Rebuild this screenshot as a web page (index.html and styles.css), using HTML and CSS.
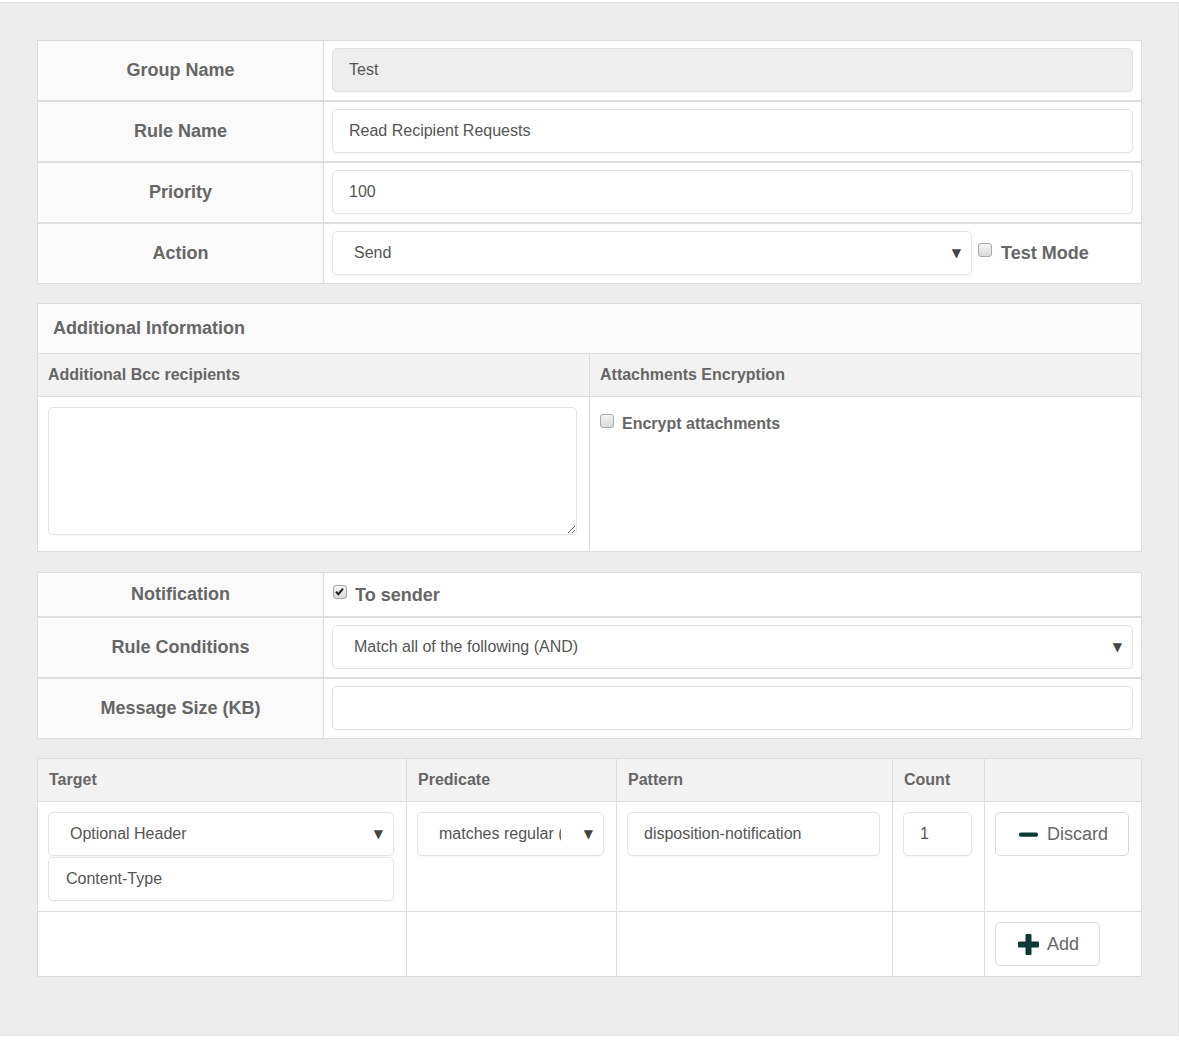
FILE: index.html
```html
<!DOCTYPE html>
<html>
<head>
<meta charset="utf-8">
<link rel="stylesheet" href="styles.css">
</head>
<body>
<div class="page">
  <div class="kv">
    <div class="row">
      <div class="label">Group Name</div>
      <div class="field"><div class="input disabled">Test</div></div>
    </div>
    <div class="row">
      <div class="label">Rule Name</div>
      <div class="field"><div class="input">Read Recipient Requests</div></div>
    </div>
    <div class="row">
      <div class="label">Priority</div>
      <div class="field"><div class="input">100</div></div>
    </div>
    <div class="row">
      <div class="label">Action</div>
      <div class="field field-action">
        <div class="select grow"><span class="sel-text">Send</span><span class="arrow">▼</span></div>
        <div class="check-label test-mode"><span class="checkbox"></span><span>Test Mode</span></div>
      </div>
    </div>
  </div>

  <div class="panel">
    <div class="panel-head">Additional Information</div>
    <div class="two-col">
      <div class="sub-head">Additional Bcc recipients</div>
      <div class="sub-head divider">Attachments Encryption</div>
      <div class="two-body"><textarea class="textarea"></textarea></div>
      <div class="two-body divider">
        <div class="check-label small"><span class="checkbox"></span><span>Encrypt attachments</span></div>
      </div>
    </div>
  </div>

  <div class="kv kv-second">
    <div class="row row-short">
      <div class="label">Notification</div>
      <div class="field field-check">
        <div class="check-label"><span class="checkbox checked"><svg viewBox="0 0 13 13" width="13" height="13"><path d="M3 6.8 L5.4 9.2 L10 3.6" fill="none" stroke="#222" stroke-width="2"/></svg></span><span>To sender</span></div>
      </div>
    </div>
    <div class="row">
      <div class="label">Rule Conditions</div>
      <div class="field"><div class="select grow"><span class="sel-text">Match all of the following (AND)</span><span class="arrow">▼</span></div></div>
    </div>
    <div class="row">
      <div class="label">Message Size (KB)</div>
      <div class="field"><div class="input"></div></div>
    </div>
  </div>

  <div class="conds">
    <div class="c-head">Target</div>
    <div class="c-head bl">Predicate</div>
    <div class="c-head bl">Pattern</div>
    <div class="c-head bl">Count</div>
    <div class="c-head bl"></div>

    <div class="c-cell bt">
      <div class="select"><span class="sel-text">Optional Header</span><span class="arrow">▼</span></div>
      <div class="input input-plain stack">Content-Type</div>
    </div>
    <div class="c-cell bt bl">
      <div class="select"><span class="sel-text clip">matches regular (</span><span class="arrow">▼</span></div>
    </div>
    <div class="c-cell bt bl"><div class="input">disposition-notification</div></div>
    <div class="c-cell bt bl"><div class="input">1</div></div>
    <div class="c-cell bt bl">
      <div class="btn"><svg class="ico" viewBox="0 0 21 21" width="21" height="21"><rect x="1" y="8.5" width="19" height="4.2" rx="1.8" fill="#0e3a36"/></svg><span>Discard</span></div>
    </div>

    <div class="c-cell bt"></div>
    <div class="c-cell bt bl"></div>
    <div class="c-cell bt bl"></div>
    <div class="c-cell bt bl"></div>
    <div class="c-cell bt bl">
      <div class="btn btn-add"><svg class="ico" viewBox="0 0 21 23" width="21" height="23"><rect x="7.5" y="1" width="6" height="21" rx="1" fill="#0e3a36"/><rect x="0" y="8.5" width="21" height="6" rx="1" fill="#0e3a36"/></svg><span>Add</span></div>
    </div>
  </div>
</div>
</body>
</html>
```

FILE: styles.css
```css
* { box-sizing: border-box; }
html, body { margin: 0; padding: 0; background: #fff; }
body {
  font-family: "Liberation Sans", Arial, sans-serif;
  color: #555;
  font-size: 16px;
}
.page {
  width: 1179px;
  height: 1034px;
  margin-top: 2px;
  background: #ececec;
  border-top: 1px solid #e2e2e2;
  border-right: 1px solid #e2e2e2;
  border-bottom: 1px solid #e2e2e2;
  padding: 37px 36px 0 37px;
  display: flex;
  flex-direction: column;
  gap: 19px;
}
.kv, .panel, .conds {
  width: 1105px;
  border: 1px solid #dcdcdc;
  background: #fff;
}
.kv-second { margin-top: 1px; }
.row {
  display: grid;
  grid-template-columns: 285px 1fr;
  border-top: 2px solid #dedede;
}
.row:first-child { border-top: 0; }
.label {
  background: #fafafa;
  display: flex;
  align-items: center;
  justify-content: center;
  font-weight: bold;
  font-size: 18px;
  color: #666;
}
.field {
  border-left: 1px solid #dcdcdc;
  padding: 7px 8px 8px 8px;
  background: #fff;
}
.input, .select {
  height: 44px;
  border: 1px solid #e4e4e4;
  border-radius: 5px;
  background: #fff;
  box-shadow: 0 1px 1px rgba(0,0,0,0.03);
  font-size: 16px;
  color: #555;
  display: flex;
  align-items: center;
  padding: 0 16px;
  white-space: nowrap;
  overflow: hidden;
}
.input.disabled { background: #eeeeee; border-color: #e2e2e2; }
.select {
  padding: 0 10px 0 21px;
  justify-content: space-between;
}
.sel-text { overflow: hidden; white-space: nowrap; }
.sel-text.clip { width: 122px; flex: none; }
.arrow {
  font-family: "DejaVu Sans", sans-serif;
  font-size: 12px;
  color: #444;
  margin-left: 8px;
}
.field-action {
  display: flex;
  align-items: center;
}
.grow { flex: 1; }
.check-label {
  display: flex;
  align-items: center;
  font-weight: bold;
  font-size: 18px;
  color: #666;
}
.checkbox {
  width: 14px;
  height: 14px;
  border: 1px solid #a9a9a9;
  border-radius: 3px;
  background: linear-gradient(#f4f4f4, #d9d9d9);
  display: inline-block;
  flex: none;
  margin-right: 9px;
  position: relative;
}
.checkbox svg { position: absolute; left: -1px; top: -1px; }
.test-mode {
  width: 161px;
  padding-left: 6px;
  align-self: center;
}
.test-mode .checkbox { margin-top: -6px; }
.panel-head {
  height: 50px;
  background: #fafafa;
  border-bottom: 1px solid #dedede;
  font-weight: bold;
  font-size: 18px;
  color: #666;
  display: flex;
  align-items: center;
  padding-left: 15px;
}
.two-col {
  display: grid;
  grid-template-columns: 551px 1fr;
}
.sub-head {
  height: 43px;
  background: #f2f2f2;
  border-bottom: 1px solid #dcdcdc;
  font-weight: bold;
  font-size: 16px;
  color: #666;
  display: flex;
  align-items: center;
  padding-left: 10px;
}
.divider { border-left: 1px solid #dcdcdc; }
.two-body {
  padding: 10px 12px 15px 10px;
  height: 154px;
}
.textarea {
  display: block;
  width: 529px;
  height: 128px;
  border: 1px solid #e4e4e4;
  border-radius: 5px;
  box-shadow: 0 1px 1px rgba(0,0,0,0.03);
  resize: vertical;
  margin: 0;
}
.check-label.small { font-size: 16px; padding-top: 8px; }
.check-label.small .checkbox { margin-top: -6px; margin-right: 8px; }
.row-short .field { padding: 0 8px; }
.row-short { height: 43px; }
.field-check { display: flex; align-items: center; }
.field-check .check-label { margin-top: 1px; }
.field-check .checkbox { margin-top: -6px; margin-left: 1px; margin-right: 8px; }
.conds {
  display: grid;
  grid-template-columns: 368px 210px 276px 92px 1fr;
}
.c-head {
  height: 42px;
  background: #f2f2f2;
  font-weight: bold;
  font-size: 16px;
  color: #666;
  display: flex;
  align-items: center;
  padding-left: 11px;
}
.bl { border-left: 1px solid #dcdcdc; }
.bt { border-top: 1px solid #dcdcdc; }
.c-cell {
  padding: 10px 12px 10px 10px;
  background: #fff;
}
.stack { margin-top: 1px; padding-left: 17px; }
.btn {
  display: inline-flex;
  align-items: center;
  height: 44px;
  border: 1px solid #dadada;
  border-radius: 5px;
  background: #fff;
  padding: 0 20px 0 22px;
  font-size: 18px;
  color: #666;
  gap: 8px;
}
.ico { display: block; flex: none; }
```
